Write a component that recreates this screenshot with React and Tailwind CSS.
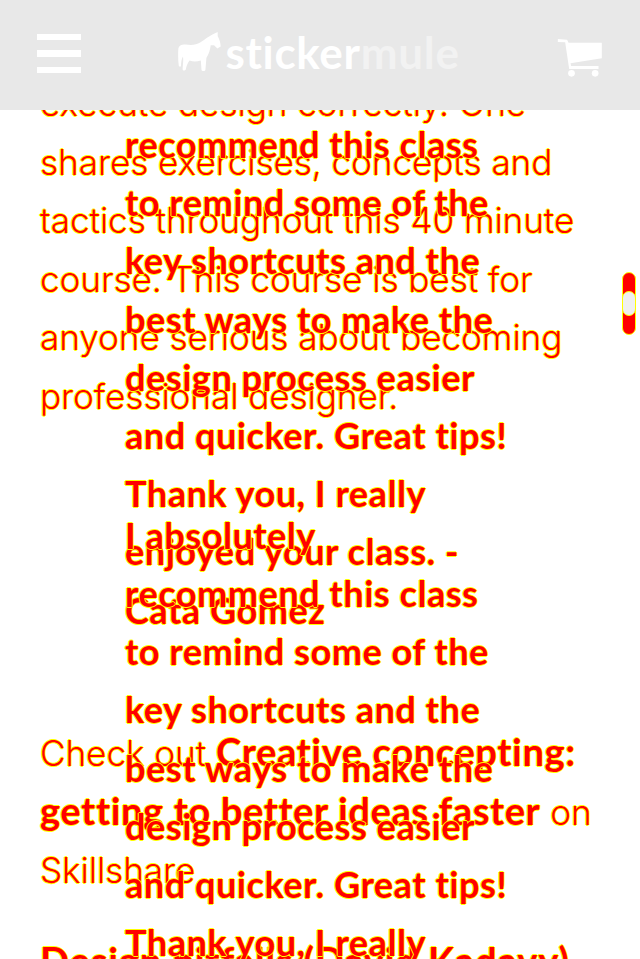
import React from 'react';

const outline = '[text-shadow:1px_0_#ff0,-1px_0_#ff0,0_1px_#ff0,0_-1px_#ff0]';

const bodyLines = [
  'execute design correctly. One',
  'shares exercises, concepts and',
  'tactics throughout this 40 minute',
  'course. This course is best for',
  'anyone serious about becoming',
  'professional designer.',
];

const quoteLines = [
  'recommend this class',
  'to remind some of the',
  'key shortcuts and the',
  'best ways to make the',
  'design process easier',
  'and quicker. Great tips!',
  'Thank you, I really',
  'enjoyed your class. -',
  'Cata Gomez',
];

const boldFont = "font-['Lato',sans-serif] font-bold [font-variant-ligatures:none]";
const bodyBold = `${boldFont} text-[38px] leading-none tracking-[0.65px]`;

const HorseIcon = () => (
  <svg width="43" height="39" viewBox="14 12 128 118" className="shrink-0" fill="#fff">
    <path d="M14 62C16 52 24 49 36 50C52 52 68 52 80 44C94 34 108 24 120 18L133 12L133 24C138 34 142 44 142 56L132 62L122 52L112 52C110 66 106 80 99 90L96 126C96 131 84 131 84 126L82 98C70 102 58 102 48 98C42 106 38 116 37 124C36 130 26 130 27 124C27 114 30 100 28 86C24 92 22 104 22 116C18 118 15 116 15 112C13 96 13 78 14 62Z" />
  </svg>
);

const CartIcon = () => (
  <svg width="45" height="38" viewBox="22 32 134 114" className="shrink-0 mt-[9px]" fill="#fff">
    <path d="M24 32L50 34C52 34 53 36 54 38L56 43L156 43L156 90L62 105L64 113L146 113L146 122L58 122L46 42L24 41Z" />
    <circle cx="65" cy="135" r="10" />
    <circle cx="136" cy="135" r="10" />
  </svg>
);

const Header = () => (
  <div className="absolute top-0 left-0 right-0 z-10 h-[110px] pb-[4px] bg-[#e8e8e8] flex items-center justify-between pl-[37px] pr-[38px] [text-shadow:none]">
    <div className="flex flex-col gap-[10px] w-[44px]">
      <div className="h-[6px] bg-white" />
      <div className="h-[7px] bg-white" />
      <div className="h-[6px] bg-white" />
    </div>
    <div className="flex items-center gap-[4px] mb-[3px]">
      <HorseIcon />
      <div className="font-['Lato',sans-serif] font-bold text-[44px] leading-none tracking-[0.7px] text-white [font-variant-ligatures:none]">
        sticker<span className="text-[#f2f2f2]">mule</span>
      </div>
    </div>
    <CartIcon />
  </div>
);

const Quote = ({ first }) => (
  <div className={`${boldFont} text-[36px] tracking-[0.55px] leading-[58.2px]`}>
    {first && <div>I absolutely</div>}
    {quoteLines.map((line) => (
      <div key={line}>{line}</div>
    ))}
  </div>
);

export default function App() {
  return (
    <div className={`relative h-[959px] overflow-hidden bg-white text-[#f00] ${outline}`}>
      <Header />
      <div className="grid">
        <div className="[grid-area:1/1] pt-[74px] pl-[40px] font-['Inter',sans-serif] text-[35px] font-light leading-[58.5px]">
          {bodyLines.map((line) => (
            <div key={line}>{line}</div>
          ))}
          <div className="mt-[299px]">
            Check out <b className={bodyBold}>Creative concepting:</b>
          </div>
          <div>
            <b className={bodyBold}>getting to better ideas faster</b> on
          </div>
          <div>Skillshare</div>
          <div className={`mt-[31px] ${boldFont} text-[38px] tracking-[0.9px]`}>Design pitfalls (David Kadavy)</div>
        </div>
        <div className="[grid-area:1/1] pt-[115px] pl-[125px] flex flex-col">
          <Quote />
          <div className="-mt-[133px]">
            <Quote first />
          </div>
        </div>
      </div>
      <div className="absolute left-[622px] top-[272px] w-[14px] h-[63px] rounded-full bg-[#f00] border border-[#ff0] flex items-center justify-center">
        <div className="-mx-[1px] shrink-0 w-[14px] h-[25px] rounded-full bg-[#f0f0f0] border border-[#ff0]" />
      </div>
    </div>
  );
}
